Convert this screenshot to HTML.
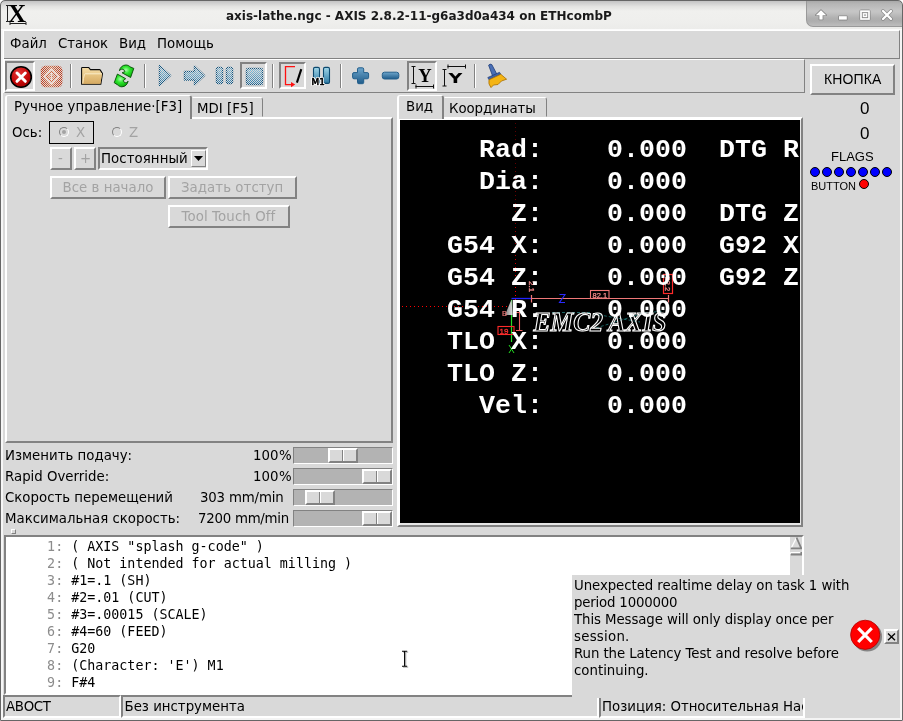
<!DOCTYPE html>
<html lang="ru">
<head>
<meta charset="utf-8">
<title>axis-lathe.ngc - AXIS 2.8.2-11-g6a3d0a434 on ETHcombP</title>
<style>
html,body{margin:0;padding:0;}
body{width:903px;height:721px;overflow:hidden;background:#fff;position:relative;
 font-family:"DejaVu Sans","Liberation Sans",sans-serif;font-size:13.333px;color:#000;}
*{box-sizing:border-box;}
.abs,.abs-all *{position:absolute;}
#win div,#win span,#win svg{position:absolute;}
#win{position:absolute;left:0;top:0;width:903px;height:721px;background:#d9d9d9;
 border-radius:5px 5px 0 0;overflow:hidden;will-change:transform;}
#frame{left:0;top:0;width:903px;height:721px;border:1px solid #666;border-radius:5px 5px 1px 1px;pointer-events:none;}
.t{white-space:nowrap;line-height:16px;height:16px;}
.raised{border:1px solid;border-color:#fff #828282 #828282 #fff;}
.raised2{border:2px solid;border-color:#fff #828282 #828282 #fff;}
.sunken{border:1px solid;border-color:#828282 #fff #fff #828282;}
.sunken2{border:2px solid;border-color:#828282 #fff #fff #828282;}
.dis{color:#a3a3a3;}
.radio{width:10px;height:10px;border-radius:50%;border:1px solid;border-color:#828282 #fff #fff #828282;background:#d9d9d9;}
.radio i{position:absolute;left:2px;top:2px;width:4px;height:4px;border-radius:50%;background:#a3a3a3;}
.trough{left:293px;width:100px;height:17px;background:#b3b3b3;border:1px solid;border-color:#828282 #fff #fff #828282;}
.thumb{top:0;width:30px;height:15px;background:#d9d9d9;border:2px solid;border-color:#fff #828282 #828282 #fff;}
.thumb i{position:absolute;left:12px;top:0;width:2px;height:11px;border-left:1px solid #828282;border-right:1px solid #fff;}
.ln{font-size:13.333px;letter-spacing:0;white-space:pre;}
.ln b{font-weight:normal;color:#8c8c8c;position:static;}
.sep{top:64px;width:2px;height:24px;border-left:1px solid #828282;border-right:1px solid #fff;}
.lib{font-family:"Liberation Sans",sans-serif;}
.mono{font-family:"DejaVu Sans Mono","Liberation Mono",monospace;}
.dro{font-family:"Liberation Mono",monospace;font-weight:bold;font-size:26.6px;letter-spacing:0.04px;color:#fff;white-space:pre;line-height:32px;height:32px;}
</style>
</head>
<body>
<div id="win">
<!-- TITLEBAR -->
<div id="titlebar" style="left:0;top:0;width:903px;height:30px;background:linear-gradient(#c4c4c4 0,#c6c6c6 1.500px,#cfcfcf 3px,#e3e3e1 6.500px,#f0f0ee 11px,#efefed 20px,#ececea 29px);"></div>
<div style="left:0;top:29px;width:903px;height:1px;background:#fbfbfb;"></div>
<div id="xicon" style="left:5px;top:2px;width:24px;height:24px;">
 <span class="t" style="left:3px;top:-2px;font-family:'Liberation Serif',serif;font-weight:bold;font-size:25px;line-height:28px;height:28px;">X</span>
 <svg width="24" height="24" style="left:0;top:0" viewBox="0 0 24 24"><path d="M2.5 3.5V19.5M1 3.5H4.5M1 19.5H4.5M5 21.5H21M5 20V23M21 20V23" stroke="#222" stroke-width="1" fill="none"/></svg>
</div>
<span class="t" style="left:226px;top:8px;font-weight:bold;font-size:12px;color:#1a1a1a;letter-spacing:0px;">axis-lathe.ngc - AXIS 2.8.2-11-g6a3d0a434 on ETHcombP</span>
<div id="wbtns" style="left:806px;top:1px;width:96px;height:26px;border-radius:0 4px 0 7px;background:linear-gradient(#a9a9a9 0,#b6b6b6 3px,#c6c6c6 10px,#c2c2c2 12px,#b0b0b0 17px,#adadad 20px,#c0c0c0 26px);border-left:1px solid #999;border-bottom:1px solid #999;"></div>
<svg width="96" height="26" style="left:806px;top:1px" viewBox="806 1 96 26">
 <g fill="none" stroke="#707070" stroke-opacity=".65" stroke-linejoin="round" stroke-linecap="round">
  <path d="M821 10.200L826.200 15.200H822.600V19.400H819.400V15.200H815.800Z" stroke-width="1.600"/>
  <rect x="839" y="16.200" width="7.800" height="3.400" stroke-width="1.600"/>
  <rect x="861" y="11.200" width="8" height="7.800" stroke-width="3.200"/>
  <path d="M883 11L891 19M891 11L883 19" stroke-width="3.800"/>
 </g>
 <g fill="#fff">
  <path d="M821 10.200L826.200 15.200H822.600V19.400H819.400V15.200H815.800Z"/>
  <rect x="839" y="16.200" width="7.800" height="3.400"/>
 </g>
 <g fill="none" stroke="#fff">
  <rect x="861" y="11.200" width="8" height="7.800" stroke-width="1.700"/>
  <rect x="863.400" y="13.700" width="3.200" height="2.800" stroke-width="1"/>
  <path d="M883 11L891 19M891 11L883 19" stroke-width="2.300" stroke-linecap="round"/>
 </g>
</svg>
<!-- MENUBAR -->
<div class="raised" style="left:3px;top:30px;width:897px;height:29px;background:#d9d9d9;"></div>
<span class="t" style="left:10px;top:36px;">Файл</span>
<span class="t" style="left:58px;top:36px;">Станок</span>
<span class="t" style="left:119px;top:36px;">Вид</span>
<span class="t" style="left:157px;top:36px;">Помощь</span>
<!-- TOOLBAR -->
<div class="raised" style="left:4px;top:59px;width:801px;height:34px;"></div>
<div class="sunken2" style="left:5px;top:61px;width:30px;height:30px;"></div>
<div class="sunken2" style="left:240px;top:62px;width:27px;height:27px;"></div>
<div class="sunken2" style="left:279px;top:62px;width:27px;height:27px;"></div>
<div class="sunken2" style="left:407px;top:61px;width:30px;height:30px;"></div>
<div class="sep" style="left:70px;"></div><div class="sep" style="left:144px;"></div><div class="sep" style="left:272px;"></div><div class="sep" style="left:340px;"></div><div class="sep" style="left:474px;"></div>
<svg id="tbicons" width="801" height="34" style="left:4px;top:59px" viewBox="4 59 801 34">
<defs>
 <pattern id="dith" width="2" height="2" patternUnits="userSpaceOnUse"><rect width="1" height="1" fill="#fff"/><rect x="1" y="1" width="1" height="1" fill="#fff"/></pattern>
 <mask id="dm"><rect x="0" y="55" width="810" height="40" fill="url(#dith)"/></mask>
 <radialGradient id="redg" cx=".4" cy=".3" r=".8"><stop offset="0" stop-color="#e23636"/><stop offset=".6" stop-color="#c40808"/><stop offset="1" stop-color="#8e0000"/></radialGradient>
 <linearGradient id="blug" x1="0" y1="0" x2="0" y2="1"><stop offset="0" stop-color="#6ea6cc"/><stop offset="1" stop-color="#1f5c8a"/></linearGradient>
 <linearGradient id="dblu" gradientUnits="userSpaceOnUse" x1="0" y1="65" x2="0" y2="86"><stop offset="0" stop-color="#a4d2e6"/><stop offset="1" stop-color="#2272a4"/></linearGradient>
 <linearGradient id="m1g" x1="0" y1="0" x2="0" y2="1"><stop offset="0" stop-color="#a0d6e8"/><stop offset="1" stop-color="#2f7aa4"/></linearGradient>
 <linearGradient id="fold" x1="0" y1="0" x2="0" y2="1"><stop offset="0" stop-color="#f5dda6"/><stop offset="1" stop-color="#dcb570"/></linearGradient>
 <linearGradient id="fold2" x1="0" y1="0" x2="0" y2="1"><stop offset="0" stop-color="#e9c887"/><stop offset="1" stop-color="#d6aa62"/></linearGradient>
 <radialGradient id="grn" cx=".45" cy=".4" r=".6"><stop offset="0" stop-color="#a8ffa8"/><stop offset=".45" stop-color="#2ee52e"/><stop offset="1" stop-color="#0cae0c"/></radialGradient>
 <linearGradient id="powg" gradientUnits="userSpaceOnUse" x1="41" y1="0" x2="62" y2="0"><stop offset="0" stop-color="#c0391a"/><stop offset=".5" stop-color="#d4683f"/><stop offset="1" stop-color="#c0391a"/></linearGradient>
</defs>
<!-- estop -->
<circle cx="21" cy="77" r="10.300" fill="url(#redg)" stroke="#000" stroke-width="1.600"/>
<path d="M17 73L25.300 81.300M25.300 73L17 81.300" stroke="#fff" stroke-width="3" stroke-linecap="round"/>
<!-- power (dithered) -->
<g mask="url(#dm)"><rect x="40.800" y="65.800" width="21.600" height="21.400" rx="4.500" fill="url(#powg)"/></g>
<path d="M51.500 69L59 76.500L51.500 84L44 76.500Z" fill="none" stroke="#f6efea" stroke-width="1.700" opacity=".8"/>
<path d="M51.500 73L55 76.500L51.500 80L48 76.500Z" fill="none" stroke="#f6efea" stroke-width="1" opacity=".6"/>
<path d="M51.500 72.500V80.500" stroke="#f6efea" stroke-width="1.200" opacity=".75"/>
<!-- folder -->
<path d="M81.600 84.300V68Q81.600 67.400 82.400 67.400H88.600L90.400 69.600H99.400Q100.200 69.600 100.500 70.400L102.500 73.600L100.800 84.300Z" fill="url(#fold)" stroke="#0a0a0a" stroke-width="1.050" stroke-linejoin="round"/>
<path d="M85 73.500H102.100L100.500 83.800H82.400Q82.900 78 84.100 74.300Q84.400 73.500 85 73.500Z" fill="url(#fold2)"/>
<path d="M82.800 83.500Q83.300 78 84.400 74.500Q84.700 73.800 85.200 73.800H101.900" stroke="#fcefd0" stroke-width=".9" fill="none"/>
<!-- reload -->
<g fill="url(#grn)" stroke="#064d06" stroke-width=".9" stroke-linejoin="round">
<path d="M119.400 70.700C120 67.500 122.500 65 125.800 65C127.600 65 129 65.700 130 66.800L133.800 68.400L130.600 77.500L122.100 72.800L124.900 71.700C124.700 70.500 123.600 69.300 122.200 69.200C121 69.200 120.100 69.800 119.400 70.700Z"/>
<path d="M128.100 81.200C127.500 84.400 125 86.800 121.900 86.800C120.200 86.800 118.800 86.100 117.800 85L114.200 82.700L117.400 74.100L125.700 78.700L123.300 80.500C123.600 81.800 124.500 82.700 125.600 82.700C126.600 82.700 127.400 82.100 128.100 81.200Z"/>
</g>
<!-- play / step / pause / stop (dithered blue) -->
<g mask="url(#dm)" fill="url(#dblu)" stroke="#135680" stroke-width="1.500" stroke-linejoin="round">
<path d="M159.500 65.500L170.500 75.500L159.500 85.500Z"/>
<path d="M184.500 71.500H194.500V66L204.500 75.500L194.500 85V80H184.500Z"/>
<rect x="216.500" y="67.500" width="6" height="16" rx="1.500"/><rect x="226.500" y="67.500" width="6" height="16" rx="1.500"/>
<rect x="246.500" y="68.500" width="16" height="16" rx="1.500"/>
</g>
<!-- block delete -->
<path d="M295 66.600H285.500V84.600H292" fill="none" stroke="#ff1010" stroke-width="1.300"/>
<path d="M291 82L295.200 84.600L291 87.200Z" fill="#ff1010"/>
<path d="M301.300 69.200L296.900 82.600" stroke="#000" stroke-width="2.100"/>
<!-- M1 -->
<rect x="313.500" y="67.400" width="6" height="16" rx="1.500" fill="url(#m1g)" stroke="#0d4a70" stroke-width="1.100"/>
<rect x="323.500" y="67.400" width="6" height="16" rx="1.500" fill="url(#m1g)" stroke="#0d4a70" stroke-width="1.100"/>
<text x="311.500" y="84.700" font-family="DejaVu Sans,Liberation Sans,sans-serif" font-size="8.700" fill="#000" stroke="#fff" stroke-width="2.200" stroke-linejoin="round" paint-order="stroke" textLength="13.300" lengthAdjust="spacingAndGlyphs">M1</text>
<text x="311.500" y="84.700" font-family="DejaVu Sans,Liberation Sans,sans-serif" font-size="8.700" fill="#000" stroke="#000" stroke-width=".350" textLength="13.300" lengthAdjust="spacingAndGlyphs">M1</text>
<!-- plus minus -->
<path d="M358.800 67.800H362.400Q363.700 67.800 363.700 69.100V72.600H367.200Q368.600 72.600 368.600 74V77.400Q368.600 78.800 367.200 78.800H363.700V82.400Q363.700 83.700 362.400 83.700H358.800Q357.500 83.700 357.500 82.400V78.800H354Q352.600 78.800 352.600 77.400V74Q352.600 72.600 354 72.600H357.500V69.100Q357.500 67.800 358.800 67.800Z" fill="url(#blug)" stroke="#235f8c" stroke-width="1" stroke-linejoin="round"/>
<rect x="382.300" y="72.200" width="16.500" height="6.800" rx="2.200" fill="url(#blug)" stroke="#235f8c" stroke-width="1"/>
<!-- view Y -->
<text x="418.200" y="82" font-family="Liberation Serif,serif" font-weight="bold" font-size="19.500" fill="#000" textLength="13.400" lengthAdjust="spacingAndGlyphs">Y</text>
<path d="M413.500 66V84M411.500 66.500H415.500M411.500 83.500H415.500M415.500 86.500H434M416 84.500V88.500M433.500 84.500V88.500" stroke="#111" stroke-width="1" fill="none"/>
<!-- view Y2 -->
<text x="448.500" y="82.600" font-family="DejaVu Sans,Liberation Sans,sans-serif" font-weight="bold" font-size="14.500" fill="#000" textLength="13.800" lengthAdjust="spacingAndGlyphs">Y</text>
<path d="M444.500 69.500V86M442.500 69.500H446.500M442.500 86H446.500M447.500 66.500H466M448 64.500V68.500M465.500 64.500V68.500" stroke="#111" stroke-width="1" fill="none"/>
<!-- broom -->
<path d="M488.600 65.200Q490 63.400 491.800 64.600L496.800 74L492.600 76Z" fill="#4a6fb5" stroke="#223f7a" stroke-width=".8"/>
<path d="M487.800 77.500L499.500 72.300L500.800 74.300L489 79.800Z" fill="#3f62a8" stroke="#223f7a" stroke-width=".7"/>
<path d="M489 79.800L500.800 74.300L506.600 79.200L501.500 81L498 84.500L493.500 85L491 87.600Q488 84 489 79.800Z" fill="#f4b414" stroke="#a86e00" stroke-width=".8" stroke-linejoin="round"/>
</svg>
<!-- LEFTTABS -->
<div style="left:5px;top:117px;width:388px;height:326px;border:2px solid;border-color:#fff #828282 #828282 #fff;"></div>
<div style="left:192px;top:97px;width:71px;height:20px;border:1px solid;border-color:#fff #828282 transparent transparent;border-radius:0 3px 0 0;"></div>
<div style="left:5px;top:95px;width:187px;height:24px;background:#d9d9d9;border:2px solid;border-color:#fff #828282 transparent #fff;border-width:1px 2px 0 2px;border-radius:3px 3px 0 0;"></div>
<span class="t" style="left:14px;top:99px;letter-spacing:0.05px;">Ручное управление·[F3]</span>
<span class="t" style="left:197px;top:101px;letter-spacing:0.03px;">MDI [F5]</span>
<span class="t" style="left:12px;top:125px;">Ось:</span>
<div style="left:49px;top:121px;width:45px;height:23px;border:1px solid #000;"></div>
<div class="radio" style="left:59px;top:127px;"><i></i></div>
<span class="t dis" style="left:76px;top:125px;">X</span>
<div class="radio" style="left:112px;top:127px;"></div>
<span class="t dis" style="left:129px;top:125px;">Z</span>
<div class="raised2" style="left:50px;top:147px;width:22px;height:23px;"></div>
<span class="t dis" style="left:58px;top:151px;">-</span>
<div class="raised2" style="left:74px;top:147px;width:22px;height:23px;"></div>
<span class="t dis" style="left:80px;top:151px;">+</span>
<div class="sunken2" style="left:98px;top:147px;width:110px;height:23px;"></div>
<span class="t" style="left:101px;top:151px;letter-spacing:0.07px;">Постоянный</span>
<div class="raised" style="left:191px;top:150px;width:15px;height:17px;"></div>
<svg width="9" height="5" style="left:194px;top:156px" viewBox="0 0 9 5"><path d="M0 0H9L4.500 5Z" fill="#000"/></svg>
<div class="raised2" style="left:50px;top:176px;width:116px;height:23px;"></div>
<span class="t dis" style="left:62.500px;top:180px;letter-spacing:0.03px;">Все в начало</span>
<div class="raised2" style="left:168px;top:176px;width:129px;height:23px;"></div>
<span class="t dis" style="left:181px;top:180px;letter-spacing:0.06px;">Задать отступ</span>
<div class="raised2" style="left:168px;top:205px;width:122px;height:23px;"></div>
<span class="t dis" style="left:181.500px;top:209px;letter-spacing:0.1px;">Tool Touch Off</span>
<!-- RIGHTTABS -->
<div style="left:397px;top:117px;width:406px;height:410px;border:2px solid;border-color:#fff #828282 #828282 #fff;"></div>
<div style="left:399px;top:119px;width:402px;height:406px;background:#e6e6e6;border-left:1px solid #fff;border-top:1px solid #fff;"></div>
<div style="left:444px;top:97px;width:103px;height:20px;border:1px solid;border-color:#fff #828282 transparent transparent;border-radius:0 3px 0 0;"></div>
<div style="left:397px;top:95px;width:47px;height:24px;background:#d9d9d9;border:2px solid;border-color:#fff #828282 transparent #fff;border-width:1px 2px 0 2px;border-radius:3px 3px 0 0;"></div>
<span class="t" style="left:406px;top:99px;">Вид</span>
<span class="t" style="left:449px;top:101px;letter-spacing:-0.05px;">Координаты</span>
<!-- PREVIEW -->
<div id="gl" style="left:400px;top:120px;width:400px;height:403px;background:#000;overflow:hidden;">
<svg id="plot" width="400" height="404" style="left:0;top:0" viewBox="400 120 400 404" font-family="Liberation Sans,sans-serif">
<defs><linearGradient id="redfade" gradientUnits="userSpaceOnUse" x1="0" y1="120" x2="0" y2="300"><stop offset="0" stop-color="#560000"/><stop offset=".5" stop-color="#700000"/><stop offset=".75" stop-color="#c00000"/><stop offset=".92" stop-color="#ff0000"/></linearGradient><linearGradient id="cone" x1="0" y1="0" x2="1" y2="0"><stop offset="0" stop-color="#7c7c7c"/><stop offset=".6" stop-color="#b8b8b8"/><stop offset="1" stop-color="#e0e0e0"/></linearGradient></defs>
<path d="M515.500 123V300" stroke="url(#redfade)" stroke-width="1" stroke-dasharray="1 3" fill="none"/>
<path d="M402 306.500H508" stroke="#ff0000" stroke-width="1" stroke-dasharray="1 3" fill="none"/>
<path d="M552 312.500H592M594 314L640 322M596 328L644 313L664 311" stroke="#2a9a9a" stroke-width=".8" stroke-dasharray="3 2" fill="none" opacity=".8"/>
<path d="M511.500 300V342" stroke="#22dd22" stroke-width="1.200" fill="none"/>
<path d="M509 345L514 353M514 345L509 353" stroke="#22dd22" stroke-width="1" fill="none"/>
<path d="M511.500 298.500H531" stroke="#2222ff" stroke-width="1.300" fill="none"/>
<path d="M531 298.500H668.500M531.500 295V302.500M668.500 295V302.500" stroke="#f07878" stroke-width="1.200" fill="none"/>
<path d="M559.500 294.500H565L559.500 302.500H565" stroke="#2a2aff" stroke-width="1.100" fill="none"/>
<path d="M511.500 299.500L505 315H512.500Z" fill="url(#cone)"/>
<path d="M519.500 312.500V330.500M516 330.500H522.500M516 312.500H522.500" stroke="#f06060" stroke-width="1.100" fill="none"/>
<rect x="498" y="326.500" width="16" height="8" fill="none" stroke="#ff2a2a" stroke-width="1.100"/>
<text x="499.500" y="333.700" font-size="8" fill="#ff3030" stroke="#ff3030" stroke-width=".3">19</text>
<text x="502" y="316" font-size="7.500" fill="#f07878" stroke="#f07878" stroke-width=".2">B</text>
<rect x="590.500" y="290.500" width="18.500" height="8" fill="none" stroke="#f07878" stroke-width="1.100"/>
<text x="592.500" y="297.600" font-size="7.500" fill="#f58a8a" stroke="#f58a8a" stroke-width=".25">82.1</text>
<rect x="663.500" y="274.500" width="9" height="19" fill="none" stroke="#ff2a2a" stroke-width="1.200"/>
<text transform="translate(665.300 276.500) rotate(90)" font-size="7.500" fill="#f58a8a" stroke="#f58a8a" stroke-width=".25">82.2</text>
<text transform="translate(528.500 281) rotate(90)" font-size="8" fill="#f58a8a" stroke="#f58a8a" stroke-width=".3">2.1</text>
</svg>
<span class="dro" style="left:-1px;top:14px;">     Rad:    0.000  DTG R</span>
<span class="dro" style="left:-1px;top:46px;">     Dia:    0.000</span>
<span class="dro" style="left:-1px;top:78px;">       Z:    0.000  DTG Z</span>
<span class="dro" style="left:-1px;top:110px;">   G54 X:    0.000  G92 X</span>
<span class="dro" style="left:-1px;top:142px;">   G54 Z:    0.000  G92 Z</span>
<span class="dro" style="left:-1px;top:174px;">   G54 R:    0.000</span>
<span class="dro" style="left:-1px;top:206px;">   TLO X:    0.000</span>
<span class="dro" style="left:-1px;top:238px;">   TLO Z:    0.000</span>
<span class="dro" style="left:-1px;top:270px;">     Vel:    0.000</span>
<svg width="160" height="30" style="left:128px;top:186px" viewBox="528 306 160 30"><text x="533.500" y="331" font-family="Liberation Serif,serif" font-style="italic" font-weight="bold" font-size="27" fill="none" stroke="#fff" stroke-width="1.100" textLength="133" lengthAdjust="spacingAndGlyphs">EMC2 AXIS</text></svg>
</div>
<!-- SIDEPANEL -->
<div class="raised2" style="left:810px;top:64px;width:85px;height:31px;"></div>
<span class="t lib" style="left:824px;top:71px;font-size:14px;letter-spacing:0.12px;">КНОПКА</span>
<span class="t lib" style="left:860px;top:99px;font-size:17px;line-height:20px;height:20px;">0</span>
<span class="t lib" style="left:860px;top:124px;font-size:17px;line-height:20px;height:20px;">0</span>
<span class="t lib" style="left:831px;top:149px;font-size:13px;">FLAGS</span>
<svg width="94" height="26" style="left:806px;top:164px" viewBox="806 164 94 26">
<g fill="#0000ff" stroke="#000" stroke-width="1"><circle cx="815" cy="172" r="4.5"/><circle cx="827" cy="172" r="4.5"/><circle cx="839" cy="172" r="4.5"/><circle cx="851" cy="172" r="4.5"/><circle cx="863" cy="172" r="4.5"/><circle cx="875" cy="172" r="4.5"/><circle cx="887" cy="172" r="4.5"/></g>
<circle cx="864" cy="184" r="4.5" fill="#ff0000" stroke="#000" stroke-width="1"/>
</svg>
<span class="t lib" style="left:811px;top:178px;font-size:11px;">BUTTON</span>
<!-- SLIDERS -->
<span class="t" style="left:5px;top:448px;">Изменить подачу:</span>
<span class="t" style="left:253px;top:448px;">100</span><span class="t" style="left:279px;top:448px;">%</span>
<span class="t" style="left:5px;top:469px;">Rapid Override:</span>
<span class="t" style="left:253px;top:469px;">100</span><span class="t" style="left:279px;top:469px;">%</span>
<span class="t" style="left:5px;top:490px;">Скорость перемещений</span>
<span class="t" style="left:200px;top:490px;letter-spacing:-0.17px;">303 mm/min</span>
<span class="t" style="left:5px;top:511px;">Максимальная скорость:</span>
<span class="t" style="left:198px;top:511px;letter-spacing:-0.25px;">7200 mm/min</span>
<div class="trough" style="top:447px;"><div class="thumb" style="left:34px;"><i></i></div></div>
<div class="trough" style="top:468px;"><div class="thumb" style="left:68px;"><i></i></div></div>
<div class="trough" style="top:489px;"><div class="thumb" style="left:11px;"><i></i></div></div>
<div class="trough" style="top:510px;"><div class="thumb" style="left:68px;"><i></i></div></div>
<div style="left:11px;top:529px;width:5px;height:5px;border:1px solid;border-color:#fff #828282 #828282 #fff;"></div>
<!-- CODE -->
<div class="sunken2" style="left:4px;top:535px;width:800px;height:160px;background:#fff;overflow:hidden;">
<span class="t mono ln" style="left:1px;top:2px;"><b>     1: </b>( AXIS &quot;splash g-code&quot; )</span>
<span class="t mono ln" style="left:1px;top:19px;"><b>     2: </b>( Not intended for actual milling )</span>
<span class="t mono ln" style="left:1px;top:36px;"><b>     3: </b>#1=.1 (SH)</span>
<span class="t mono ln" style="left:1px;top:53px;"><b>     4: </b>#2=.01 (CUT)</span>
<span class="t mono ln" style="left:1px;top:70px;"><b>     5: </b>#3=.00015 (SCALE)</span>
<span class="t mono ln" style="left:1px;top:87px;"><b>     6: </b>#4=60 (FEED)</span>
<span class="t mono ln" style="left:1px;top:104px;"><b>     7: </b>G20</span>
<span class="t mono ln" style="left:1px;top:121px;"><b>     8: </b>(Character: 'E') M1</span>
<span class="t mono ln" style="left:1px;top:138px;"><b>     9: </b>F#4</span>
<div style="left:784px;top:0;width:12px;height:156px;background:#d9d9d9;"></div>
<svg width="12" height="20" style="left:784px;top:0" viewBox="0 0 12 20"><path d="M6.500 0.500L1 11.500" stroke="#fff" stroke-width="1.200"/><path d="M6.500 0.500L11.300 11.300H0.800" stroke="#828282" stroke-width="1.800" fill="none"/><path d="M0.500 17V15.500H11" stroke="#fff" fill="none"/><path d="M0.800 17.500H11.300V15" stroke="#828282" stroke-width="1.800" fill="none"/></svg>
</div>
<svg width="12" height="20" style="left:400px;top:649px" viewBox="0 0 12 20"><path d="M3 3.200H8.200M5.600 3.200V18.200M3 18.200H8.200" stroke="#999" stroke-width="1.600" fill="none" opacity=".55"/><path d="M2 2.200H7.200M4.600 2.200V17.200M2 17.200H7.200" stroke="#000" stroke-width="1.100" fill="none"/></svg>
<!-- STATUS -->
<div class="sunken2" style="left:3px;top:695px;width:118px;height:23px;"></div>
<span class="t" style="left:6px;top:699px;letter-spacing:-0.3px;">АВОСТ</span>
<div class="sunken2" style="left:121px;top:695px;width:478px;height:23px;"></div>
<span class="t" style="left:124.500px;top:699px;">Без инструмента</span>
<div class="sunken2" style="left:599px;top:695px;width:206px;height:23px;overflow:hidden;"><span class="t" style="left:1px;top:2px;">Позиция: Относительная Настоящая</span></div>
<!-- NOTIFY -->
<div style="left:572px;top:575px;width:328px;height:123px;background:#d9d9d9;"></div>
<span class="t" style="left:574px;top:578px;letter-spacing:-0.08px;">Unexpected realtime delay on task 1 with</span>
<span class="t" style="left:574px;top:595px;letter-spacing:-0.19px;">period 1000000</span>
<span class="t" style="left:574px;top:612px;letter-spacing:-0.09px;">This Message will only display once per</span>
<span class="t" style="left:574px;top:629px;letter-spacing:0.25px;">session.</span>
<span class="t" style="left:574px;top:646px;letter-spacing:-0.08px;">Run the Latency Test and resolve before</span>
<span class="t" style="left:574px;top:663px;letter-spacing:0.00px;">continuing.</span>
<svg width="36" height="36" style="left:847px;top:618px" viewBox="847 618 36 36"><circle cx="867.200" cy="636.800" r="14.800" fill="#858585"/><circle cx="865.200" cy="634.800" r="14.600" fill="#ff0000" stroke="#b00000" stroke-width=".8"/><path d="M858.200 628.200L871.800 642M871.800 628.200L858.200 642" stroke="#fff" stroke-width="3.200"/></svg>
<div class="raised2" style="left:884px;top:629px;width:15px;height:15px;"></div>
<svg width="9" height="8" style="left:887px;top:633px" viewBox="0 0 9 8"><path d="M1 .5L8 7.200M8 .5L1 7.200" stroke="#000" stroke-width="1.300"/></svg>
<!-- FRAME -->
<div style="left:1px;top:30px;width:2px;height:689px;background:#f6f6f6;"></div>
<div style="left:3px;top:30px;width:1px;height:63px;background:#fff;"></div>
<div style="left:900px;top:30px;width:2px;height:689px;background:#f4f4f4;"></div>
<div style="left:1px;top:718px;width:901px;height:2px;background:#f4f4f4;"></div>
<div id="frame"></div>
</div>
</body>
</html>
